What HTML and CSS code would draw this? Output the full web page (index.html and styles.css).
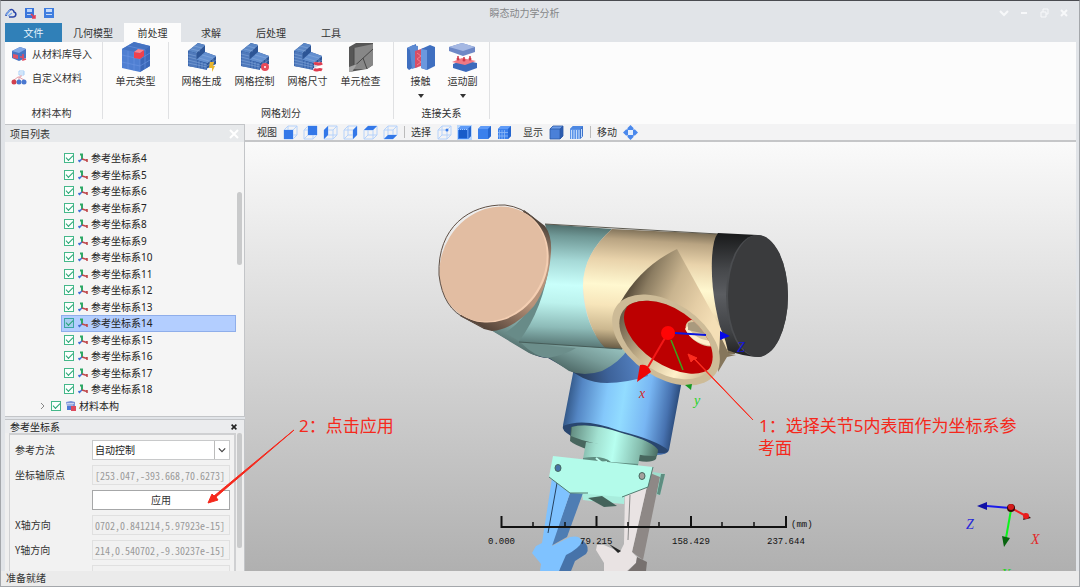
FILE: index.html
```html
<!DOCTYPE html>
<html lang="zh-CN">
<head>
<meta charset="utf-8">
<title>瞬态动力学分析</title>
<link rel="stylesheet" href="styles.css">
</head>
<body>
<svg class="defs" aria-hidden="true">
  <defs>
    <symbol id="i-csys" viewBox="0 0 10 10"><path d="M4 6V1M2 1.500H5" stroke="#2fa866" stroke-width="2" fill="none"/><path d="M4 6L1 8.500M.5 7l1.500 2" stroke="#3f6fd6" stroke-width="1.600" fill="none"/><path d="M4 6l5 1.500M9 6v3" stroke="#c0494c" stroke-width="1.600" fill="none"/></symbol>
    <symbol id="i-mat" viewBox="0 0 10 10"><path d="M0 1l5-1 4 1v4H1z" fill="#7b93d8"/><path d="M1 4h6M1 2.500h7" stroke="#e8eefc" stroke-width=".7"/><path d="M1 5h5v4H1z" fill="#4d79d6"/><path d="M5 5h5v5H5z" fill="#dc4a5e"/></symbol>
    <symbol id="i-mesh" viewBox="0 0 30 30">
      <path d="M1 9L11 1l7 2v7l11 4v8l-10 5L1 24z" fill="#2d5596"/>
      <path d="M1 9L11 1l7 2-9 8z" fill="#5b87c6"/><path d="M9 18l9-8 11 4-9 7z" fill="#6490d0"/>
      <path d="M1 9l8 2v7l11 3v7L1 24z" fill="#3b67ae"/>
      <path d="M1 12l8 2M1 15l8 2M1 18l8 2 11 3M1 21l19 4M3 9.500V24M5 10v15M7 10.500V25M9 11v15M12 19v7M15 20v7M18 21v6M4 7l9 2M7 4l8 2M9 11l9-8M20 21l9-7M20 24l9-6M23 19v7M26 17v7M12 16l10 3M15 13l11 3" stroke="#8fb0e0" stroke-width=".5" fill="none"/>
    </symbol>
    <symbol id="i-wire" viewBox="0 0 15 15"><path d="M1 5h9v9H1zM5 1h9v9H5zM1 5l4-4M10 5l4-4M10 14l4-4M1 14l4-4" fill="none" stroke="#b5d2fb" stroke-width="1"/></symbol>
    <symbol id="i-solid" viewBox="0 0 15 15"><path d="M1 4l3-3h10v10l-3 3H1z" fill="#3b80ec"/><path d="M1 4l3-3h10l-3 3z" fill="#5f9bf7"/><path d="M11 4l3-3v10l-3 3z" fill="#2566d0"/></symbol>
    <symbol id="i-shaded" viewBox="0 0 15 15"><path d="M1 4l3-3h10v10l-3 3H1z" fill="#4a80d8"/><path d="M1 4l3-3h10l-3 3z" fill="#6d9ce6"/><path d="M11 4l3-3v10l-3 3z" fill="#2c5cb0"/><path d="M1 4l3-3h10v10l-3 3H1zM1 4h10v10M11 4l3-3" stroke="#2c58a6" stroke-width=".8" fill="none"/></symbol>
    <symbol id="i-lined" viewBox="0 0 15 15"><path d="M1 4l3-3h10v10l-3 3H1z" fill="#5b93e8"/><path d="M1 4l3-3h10l-3 3z" fill="#4d88e2"/><path d="M11 4l3-3v10l-3 3z" fill="#3c73cc"/><path d="M2.500 5v9M5 5v9M7.500 5v9M10 5v9M12.500 4v8" stroke="#c5dcfb" stroke-width="1"/></symbol>
  </defs>
</svg>

<div class="app">
  <header class="titlebar">
    <div class="quick">
      <button aria-label="主页"><svg viewBox="0 0 12 12"><path d="M1 9c0-3 2-3 3-5 2-3 5-1 5 1 3 1 2 5-1 5H4" fill="none" stroke="#2b46a8" stroke-width="1.600"/><path d="M1 8l4-5M3 9l4-3" stroke="#79a9ee" stroke-width="1.300"/></svg></button>
      <button aria-label="另存为"><svg viewBox="0 0 12 12"><path d="M1 1h9v10H1z" fill="#3b76db"/><path d="M3 2h5v3H3zM3 7h5v1H3z" fill="#b9d4fb"/><path d="M7 7l4 4M11 8v3H8" stroke="#e23f55" stroke-width="1.500" fill="none"/></svg></button>
      <button aria-label="保存"><svg viewBox="0 0 12 12"><path d="M1 1h10v10H1z" fill="#3f7ddf"/><path d="M3 2h6v3H3zM3 7h6v1H3z" fill="#c5dbfb"/></svg></button>
    </div>
    <h1>瞬态动力学分析</h1>
    <div class="winctl">
      <button aria-label="展开"><svg viewBox="0 0 10 10"><path d="M1 3l4 4 4-4"/></svg></button>
      <button aria-label="最小化"><svg viewBox="0 0 10 10"><path d="M2 5h6"/></svg></button>
      <button aria-label="还原"><svg viewBox="0 0 10 10"><path d="M2 4h5v5H2zM4 4V1h5v5H7" stroke-width="1"/></svg></button>
      <button aria-label="关闭"><svg viewBox="0 0 10 10"><path d="M2 2l6 6M8 2L2 8"/></svg></button>
    </div>
  </header>

  <nav class="tabs">
    <button class="tab file">文件</button>
    <button class="tab">几何模型</button>
    <button class="tab active">前处理</button>
    <button class="tab">求解</button>
    <button class="tab">后处理</button>
    <button class="tab">工具</button>
  </nav>

  <section class="ribbon">
    <div class="group material">
      <div class="stack">
        <button class="line"><svg viewBox="0 0 16 16"><path d="M1 5l8-4 6 2v9l-7 3-7-3z" fill="#4575c4"/><path d="M1 5l8-4 6 2-7 4z" fill="#80a8e6"/><path d="M2 8l5 1v4l-5-1z" fill="#df5468"/><path d="M9 11h4M12 8v6l3-1" stroke="#e44b60" stroke-width="1.500" fill="none"/></svg>从材料库导入</button>
        <button class="line"><svg viewBox="0 0 16 16"><path d="M8 1h5v4H8zM9 3h4" fill="none" stroke="#a6cef7"/><path d="M3 10l4-3h3V5M8 7v3M8 7l5 3" stroke="#e7a4ad" fill="none"/><circle cx="3" cy="12" r="2.500" fill="#d2404e"/><circle cx="8" cy="12" r="2.500" fill="#4a78d0"/><circle cx="13" cy="12" r="2.500" fill="#4a78d0"/></svg>自定义材料</button>
      </div>
      <span class="caption">材料本构</span>
    </div>
    <div class="group single">
      <div class="tools"><button class="tool"><svg viewBox="0 0 30 30"><path d="M1 7L13 0l16 4v20l-10 6L1 26z" fill="#4f7fd2"/><path d="M1 7L13 0l16 4-10 7z" fill="#4573c2"/><path d="M19 11l10-7v20l-10 6z" fill="#3c68b8"/><path d="M1 13l18 4 10-6M1 20l18 4 10-6M7 9v18M13 10v19M7 4l17 4M19 11v19M24 8v19" stroke="#6c96e2" stroke-width=".6" fill="none"/><path d="M13 10l6 1 4-3v6l-4 3-6-1z" fill="#f0404c"/><path d="M13 10l4-3 6 1-4 3z" fill="#ff8088"/></svg>单元类型</button></div>
    </div>
    <div class="group mesh">
      <div class="tools">
        <button class="tool"><svg viewBox="0 0 30 30"><use href="#i-mesh"/><path d="M23 20h4l-1 4h2l-3 6v-4h-3z" fill="#e7b52e"/></svg>网格生成</button>
        <button class="tool"><svg viewBox="0 0 30 30"><use href="#i-mesh"/><circle cx="25" cy="25" r="2.500" fill="#fff" stroke="#e94b5a" stroke-width="3"/></svg>网格控制</button>
        <button class="tool"><svg viewBox="0 0 30 30"><use href="#i-mesh"/><path d="M21 20h8v10h-8z" fill="#fff" opacity=".7"/><path d="M21 22c3-2 4 2 8-1M21 27c3 3 4-1 8 1" stroke="#df3d50" stroke-width="3" fill="none"/></svg>网格尺寸</button>
        <button class="tool"><svg viewBox="0 0 30 30"><path d="M3 5l7-4 17 0v22l-6 4-18 3z" fill="#565656"/><path d="M8 6l19-4v21l-6 4-13 0z" fill="#878787"/><path d="M3 29L27 7M17 16l4 11M8 6v18" stroke="#484848" stroke-width="1" fill="none"/><path d="M3 25l8-3-5 8H3z" fill="#a4a4a4"/></svg>单元检查</button>
      </div>
      <span class="caption">网格划分</span>
    </div>
    <div class="group link">
      <div class="tools">
        <button class="tool"><svg viewBox="0 0 30 30"><path d="M1 6l9-4v22l-7 4-2-2z" fill="#3f6fc0"/><path d="M1 6l6-3 5 1v21l-6 2-2-19z" fill="#5d8ad2"/><path d="M9 9l9-3v17l-9 3z" fill="#d84e65"/><path d="M11 11l4 3-4 3 4 3-4 3" stroke="#f47f90" stroke-width="1" fill="none"/><path d="M15 7l9-4 5 2v19l-8 4-6-2z" fill="#3f6fc0"/><path d="M15 7l6 1v20l-6-2z" fill="#6b98de"/></svg>接触<i class="caret"></i></button>
        <button class="tool"><svg viewBox="0 0 30 30"><path d="M1 5l13-4 13 4v5l-12 4-14-5z" fill="#6d88c6"/><path d="M1 5l13-4 13 4-12 4z" fill="#a5b8e3"/><path d="M5 22l10-4 14 3v5l-11 4L5 26z" fill="#3c6abc"/><path d="M4 20l10-4 14 3-11 4z" fill="#f07984"/><path d="M10 18v-4M16 19v-4M22 18v-4" stroke="#cf3949" stroke-width="1.500" fill="none"/><circle cx="10" cy="17" r="1.500" fill="#cf3949"/><circle cx="16" cy="18" r="1.500" fill="#cf3949"/><circle cx="22" cy="17" r="1.500" fill="#cf3949"/></svg>运动副<i class="caret"></i></button>
      </div>
      <span class="caption">连接关系</span>
    </div>
  </section>

  <main class="work">
    <aside class="side">
      <section class="panel project">
        <header class="phead">项目列表<button aria-label="关闭项目列表"><svg viewBox="0 0 10 10"><path d="M1 1l8 8M9 1L1 9" stroke="#fff" stroke-width="2"/></svg></button></header>
        <div class="treewrap">
          <ul class="tree">
            <li><label><input type="checkbox" checked><svg><use href="#i-csys"/></svg>参考坐标系4</label></li>
            <li><label><input type="checkbox" checked><svg><use href="#i-csys"/></svg>参考坐标系5</label></li>
            <li><label><input type="checkbox" checked><svg><use href="#i-csys"/></svg>参考坐标系6</label></li>
            <li><label><input type="checkbox" checked><svg><use href="#i-csys"/></svg>参考坐标系7</label></li>
            <li><label><input type="checkbox" checked><svg><use href="#i-csys"/></svg>参考坐标系8</label></li>
            <li><label><input type="checkbox" checked><svg><use href="#i-csys"/></svg>参考坐标系9</label></li>
            <li><label><input type="checkbox" checked><svg><use href="#i-csys"/></svg>参考坐标系10</label></li>
            <li><label><input type="checkbox" checked><svg><use href="#i-csys"/></svg>参考坐标系11</label></li>
            <li><label><input type="checkbox" checked><svg><use href="#i-csys"/></svg>参考坐标系12</label></li>
            <li><label><input type="checkbox" checked><svg><use href="#i-csys"/></svg>参考坐标系13</label></li>
            <li class="selected"><label><input type="checkbox" checked><svg><use href="#i-csys"/></svg>参考坐标系14</label></li>
            <li><label><input type="checkbox" checked><svg><use href="#i-csys"/></svg>参考坐标系15</label></li>
            <li><label><input type="checkbox" checked><svg><use href="#i-csys"/></svg>参考坐标系16</label></li>
            <li><label><input type="checkbox" checked><svg><use href="#i-csys"/></svg>参考坐标系17</label></li>
            <li><label><input type="checkbox" checked><svg><use href="#i-csys"/></svg>参考坐标系18</label></li>
            <li class="parent"><svg class="chev" viewBox="0 0 6 8"><path d="M1 1l3 3-3 3" fill="none" stroke="#888"/></svg><label><input type="checkbox" checked><svg><use href="#i-mat"/></svg>材料本构</label></li>
          </ul>
          <div class="track"><span class="thumb upper"></span></div>
        </div>
      </section>

      <section class="panel props">
        <header class="phead plain">参考坐标系<button aria-label="关闭参考坐标系"><svg viewBox="0 0 10 10"><path d="M2 2l6 6M8 2L2 8" stroke="#222" stroke-width="2"/></svg></button></header>
        <div class="formwrap">
          <form class="form">
            <label for="method">参考方法</label>
            <div class="selectbox"><select id="method"><option>自动控制</option></select><svg viewBox="0 0 10 10"><path d="M1 3l4 4 4-4" fill="none" stroke="#444" stroke-width="1.500"/></svg></div>
            <label for="origin">坐标轴原点</label>
            <input id="origin" class="num" value="[253.047,-393.668,70.6273]" readonly>
            <button type="button" class="apply">应用</button>
            <label for="xdir">X轴方向</label>
            <input id="xdir" class="num" value="0702,0.841214,5.97923e-15]" readonly>
            <label for="ydir">Y轴方向</label>
            <input id="ydir" class="num" value="214,0.540702,-9.30237e-15]" readonly>
            <input class="num last" aria-label="Z轴方向" readonly>
          </form>
          <div class="track"><span class="thumb lower"></span></div>
        </div>
      </section>
    </aside>

    <section class="stage">
      <div class="viewbar">
        <span>视图</span>
        <div class="icons">
          <button aria-label="前视图"><svg><use href="#i-wire"/><path d="M1 5h9v9H1z" fill="#3478e8"/></svg></button>
          <button aria-label="后视图"><svg><use href="#i-wire"/><path d="M5 1h9v9H5z" fill="#3478e8"/></svg></button>
          <button aria-label="左视图"><svg><use href="#i-wire"/><path d="M1 5l4-4v9l-4 4z" fill="#3478e8"/></svg></button>
          <button aria-label="右视图"><svg><use href="#i-wire"/><path d="M10 5l4-4v9l-4 4z" fill="#3478e8"/></svg></button>
          <button aria-label="俯视图"><svg><use href="#i-wire"/><path d="M1 5l4-4h9l-4 4z" fill="#3478e8"/></svg></button>
          <button aria-label="仰视图"><svg><use href="#i-wire"/><path d="M1 14l4-4h9l-4 4z" fill="#3478e8"/></svg></button>
        </div>
        <i class="sep"></i>
        <span>选择</span>
        <div class="icons">
          <button aria-label="选择点"><svg><use href="#i-wire"/><circle cx="10" cy="5" r="1.500" fill="#3478e8"/></svg></button>
          <button aria-label="选择面" class="on"><svg><use href="#i-solid"/><path d="M1 4.500h10V14" fill="none" stroke="#a6cafd" stroke-dasharray="1 1"/><path d="M2 5h8v8H2z" fill="#195cc9"/></svg></button>
          <button aria-label="选择体"><svg><use href="#i-solid"/></svg></button>
          <button aria-label="选择网格"><svg><use href="#i-solid"/><path d="M2.500 5v9M5 5v9M7.500 5v9M1 7.500h10M1 11h10" stroke="#8db8f6" stroke-width=".8"/></svg></button>
        </div>
        <span class="show">显示</span>
        <div class="icons">
          <button aria-label="显示实体"><svg><use href="#i-shaded"/></svg></button>
          <button aria-label="显示网格"><svg><use href="#i-lined"/></svg></button>
        </div>
        <i class="sep"></i>
        <span>移动</span>
        <div class="icons"><button aria-label="移动"><svg viewBox="0 0 15 15"><path d="M7.500 0l3 3v2h-6V3zM7.500 15l3-3v-2h-6v2zM0 7.500l3-3h2v6H3zM15 7.500l-3-3h-2v6h2z" fill="#4a88ec"/><path d="M5 5h5v5H5z" fill="#e4eefc"/></svg></button></div>
      </div>
      <svg class="scene" viewBox="245 142 831 429" preserveAspectRatio="xMidYMid slice" role="img" aria-label="机械臂模型">
        <defs>
          <linearGradient id="teal" gradientUnits="userSpaceOnUse" x1="570" y1="224" x2="564" y2="346"><stop offset="0" stop-color="#4c6866"/><stop offset=".1" stop-color="#6f9896"/><stop offset=".3" stop-color="#a6d9d7"/><stop offset=".5" stop-color="#c9fffb"/><stop offset=".65" stop-color="#bcf2ed"/><stop offset=".85" stop-color="#8dbbb8"/><stop offset="1" stop-color="#587775"/></linearGradient>
          <linearGradient id="cream" gradientUnits="userSpaceOnUse" x1="650" y1="229" x2="642" y2="350"><stop offset="0" stop-color="#766952"/><stop offset=".1" stop-color="#b9a482"/><stop offset=".27" stop-color="#e9d3ab"/><stop offset=".48" stop-color="#fff8d0"/><stop offset=".65" stop-color="#f7e5ba"/><stop offset=".85" stop-color="#cbb78f"/><stop offset="1" stop-color="#695c45"/></linearGradient>
          <linearGradient id="elbow" gradientUnits="userSpaceOnUse" x1="580" y1="325" x2="560" y2="376"><stop offset="0" stop-color="#a0cdca"/><stop offset=".5" stop-color="#789c99"/><stop offset="1" stop-color="#3f5755"/></linearGradient>
          <linearGradient id="tube" gradientUnits="userSpaceOnUse" x1="566" y1="400" x2="678" y2="418"><stop offset="0" stop-color="#315584"/><stop offset=".12" stop-color="#5486c4"/><stop offset=".35" stop-color="#84c8fb"/><stop offset=".5" stop-color="#92dcff"/><stop offset=".72" stop-color="#78b6f3"/><stop offset=".9" stop-color="#4772b0"/><stop offset="1" stop-color="#25436f"/></linearGradient>
          <linearGradient id="joint" gradientUnits="userSpaceOnUse" x1="580" y1="380" x2="650" y2="365"><stop offset="0" stop-color="#283c5a"/><stop offset=".4" stop-color="#3d6299"/><stop offset="1" stop-color="#5b8bce"/></linearGradient>
          <linearGradient id="dark" gradientUnits="userSpaceOnUse" x1="735" y1="233" x2="735" y2="356"><stop offset="0" stop-color="#18191a"/><stop offset=".3" stop-color="#46484b"/><stop offset=".5" stop-color="#5b5d61"/><stop offset=".8" stop-color="#404245"/><stop offset="1" stop-color="#222"/></linearGradient>
          <linearGradient id="cone" gradientUnits="userSpaceOnUse" x1="632" y1="285" x2="713" y2="322"><stop offset="0" stop-color="#5c503d"/><stop offset=".15" stop-color="#8b7c61"/><stop offset=".45" stop-color="#c9b48f"/><stop offset=".75" stop-color="#e5cea6"/><stop offset="1" stop-color="#f4dfb6"/></linearGradient>
          <linearGradient id="capSide" gradientUnits="userSpaceOnUse" x1="545" y1="225" x2="480" y2="332"><stop offset="0" stop-color="#4e4239"/><stop offset=".25" stop-color="#b5947d"/><stop offset=".6" stop-color="#b8937a"/><stop offset="1" stop-color="#493a31"/></linearGradient>
          <linearGradient id="mint" gradientUnits="userSpaceOnUse" x1="570" y1="440" x2="658" y2="455"><stop offset="0" stop-color="#648e82"/><stop offset=".3" stop-color="#a3e2d2"/><stop offset=".5" stop-color="#b7fff0"/><stop offset=".8" stop-color="#83b9aa"/><stop offset="1" stop-color="#48695f"/></linearGradient>
          <linearGradient id="bore" gradientUnits="userSpaceOnUse" x1="620" y1="320" x2="710" y2="380"><stop offset="0" stop-color="#6d604b"/><stop offset=".35" stop-color="#c9b58f"/><stop offset=".7" stop-color="#fff0c9"/><stop offset="1" stop-color="#c5b08a"/></linearGradient>
          <clipPath id="inner"><ellipse cx="666" cy="340" rx="52" ry="32" transform="rotate(34 666 340)"/></clipPath>
        </defs>
        <!-- wrist tube -->
        <path d="M574 368L563 425Q562 430 572 436L650 455Q668 456 669 450L682 380L640 350Z" fill="url(#tube)"/>
        <path d="M563 426Q584 417 620 431Q656 440 668 450Q668 454 657 453Q630 434 590 426Q572 424 571 436Q561 430 563 426Z" fill="#29466f"/>
        <path d="M571 427Q590 422 625 434Q650 441 658 450L656 459Q650 465 626 458Q580 450 570 441Z" fill="#48665e"/>
        <path d="M572 427Q590 422 625 434Q652 441 658 450L657 456Q638 457 612 447Q582 441 571 436Z" fill="url(#mint)"/>
        <path d="M586 442Q612 444 640 454L638 466L583 459Z" fill="url(#mint)"/>
        <path d="M583 458Q603 455 611 462L638 464V470L583 464Z" fill="#5f8d81"/><path d="M596 458l6 5 5-1" stroke="#c3fff1" stroke-width="2" fill="none"/>
        <!-- gripper -->
        <path d="M653 472L665 474L660 495L650 493Z" fill="#9edfce"/><path d="M665 474L660 495L657 494L661 474Z" fill="#5e8d80"/>
        <path d="M582 494L625 492L624 504L600 502L583 500Z" fill="#a9eddd"/><path d="M588 498L602 496L617 506L604 507Z" fill="#44635b"/>
        <path d="M582 540Q591 547 586 554L575 561L571 571H559L562 558Z" fill="#4773a9"/>
        <path d="M570 493L583 493L567 537L551 546Z" fill="#4f7db3"/>
        <path d="M552 478L570 493L552 546L570 537Q580 535 582 541Q580 548 566 555L559 571H540L541 564L532 553L536 546L542 543Z" fill="#7fc2ff"/>
        <path d="M557 483L548 533" stroke="#26415f" stroke-width="1"/>
        <path d="M650 473L660 477L643 560L632 552Z" fill="#8e8886"/>
        <path d="M625 492L648 482L632 552L637 557L636 563L627 571H604V563L596 550L597 545L604 545L620 552L624 544Z" fill="#e9e3e3"/>
        <path d="M637 557L647 562L646 571H628L636 563Z" fill="#77716f"/><path d="M609 544L621 551L618 553Z" fill="#252525"/>
        <path d="M630 495L628 540" stroke="#888" stroke-width="1"/>
        <path d="M553 456L653 467L648 487L622 497L588 494L570 493L549 477Z" fill="#b3fbea"/>
        <path d="M653 467l-5 20-26 10M549 477l21 16h18" stroke="#527b70" fill="none"/>
        <ellipse cx="558" cy="468" rx="3" ry="3.500" fill="#4673a8" stroke="#47675f"/><ellipse cx="642" cy="476" rx="3" ry="3.500" fill="#a5a19e" stroke="#47675f"/>
        <!-- elbow and joint -->
        <path d="M485 326L530 353Q540 358 548 358L583 378Q594 383 607 383Q626 383 648 376L640 340L520 330Z" fill="url(#joint)"/>
        <path d="M549 255L525 341L628 349Q620 362 602 371Q584 377 569 371L548 357Q537 357 529 353L484 326Z" fill="url(#elbow)"/>
        <path d="M520 342Q545 346 576 348Q565 355 548 358Q535 357 520 342Z" fill="#6c8e8b"/>
        <!-- main tube -->
        <path d="M545 224L612 229Q582 255 583 290Q585 325 605 348L519 342Q544 305 551 250Z" fill="url(#teal)"/>
        <path d="M550 260Q543 310 519 341L505 333Q536 313 550 260Z" fill="#688b88"/>
        <path d="M612 229L718 234L735 354L700 353L605 348Q586 328 583 288Q582 255 612 229Z" fill="url(#cream)"/>
        <path d="M519 342L622 349" stroke="#465c58"/><path d="M545 224L718 234" stroke="#5d5a50"/>
        <!-- end cap, right -->
        <path d="M718 233L758 235L760 357Q744 357 727 350Q710 300 712 258Q713 239 718 233Z" fill="url(#dark)"/>
        <ellipse cx="757" cy="296" rx="31" ry="61" fill="#4b4d50"/><ellipse cx="758" cy="296" rx="30" ry="61" fill="#3a3b3d"/>
        <!-- end cap, left -->
        <path d="M524 210L545 226Q552 236 551 252Q549 285 534 306Q514 329 492 331L484 329L460 316Z" fill="url(#capSide)"/>
        <ellipse cx="495" cy="265" rx="51" ry="60" transform="rotate(32 495 265)" fill="#f4ceb2"/>
        <ellipse cx="493" cy="264" rx="51" ry="60" transform="rotate(32 493 264)" fill="#e2bda2"/>
        <path d="M439 275C437 227 470 204 505 205Q522 207 535 219M439 275Q443 309 467 319L484 328" stroke="#5f5046" fill="none"/>
        <!-- branch with open bore -->
        <path d="M677 249Q640 267 620 303L616 325L680 375L719 369L728 354Q727 342 720 327Z" fill="url(#cone)"/>
        <path d="M720 335L729 354L736 355L727 357L718 372Z" fill="#85765c"/>
        <ellipse cx="666" cy="340" rx="60" ry="37" transform="rotate(34 666 340)" fill="#cdbb97"/>
        <g clip-path="url(#inner)">
          <path d="M600 280H740V400H600Z" fill="url(#bore)"/>
          <ellipse cx="670" cy="336" rx="52" ry="29" transform="rotate(34 670 336)" fill="#bc0001"/>
          <ellipse cx="703" cy="333" rx="19" ry="11" transform="rotate(30 703 333)" fill="#d9c7a0"/>
          <path d="M687 326Q698 344 719 340L717 346Q694 346 685 329Z" fill="#fff0cc"/><path d="M688 323Q700 319 715 333L712 335Q700 333 688 330Z" fill="#a99a7e"/>
        </g>
        <!-- local axes -->
        <path d="M675 333L706 335" stroke="#0b16e0" stroke-width="2"/><path d="M720 331L730 336L720 340Z" fill="#0508e8"/>
        <path d="M671 340L683 370" stroke="#3aa51c" stroke-width="1.500"/><path d="M685 385L692 384L691 390Z" fill="#159a20"/>
        <path d="M665 338L648 367" stroke="#f31818" stroke-width="2"/><path d="M640 365Q648 363 651 372L637 382Z" fill="#ee0606"/>
        <circle cx="668" cy="333" r="7" fill="#ff0505"/>
        <g class="axis"><text x="737" y="352" fill="#1515d5">Z</text><text x="639" y="398" fill="#d22a2a">x</text><text x="694" y="405" fill="#27d327">y</text></g>
        <!-- scale -->
        <path d="M501.500 516V527H786V516M596.500 516v11M691 516v11" stroke="#111" stroke-width="2" fill="none"/>
        <path d="M533 522v5M565 522v5M628 522v5M659 522v5M722 522v5M754 522v5" stroke="#111" stroke-width="1.500"/>
        <g class="scale"><text x="488" y="544">0.000</text><text x="580" y="544">79.215</text><text x="672" y="544">158.429</text><text x="767" y="544">237.644</text><text x="791" y="527">(mm)</text></g>
        <!-- orientation triad -->
        <path d="M1010 508L987 506" stroke="#1b1bea" stroke-width="2"/><path d="M977 506L987 502V510Z" fill="#1010a5"/>
        <path d="M1011 510L1006 538" stroke="#0bf51b" stroke-width="2"/><path d="M1002 536L1010 538L1004 547Z" fill="#08640f"/>
        <path d="M1013 509L1026 516" stroke="#f12020" stroke-width="2"/><path d="M1025 513L1031 518L1023 520Z" fill="#391111"/><circle cx="1026" cy="516" r="3" fill="#e91d1d"/>
        <circle cx="1011" cy="508" r="4" fill="#3a0909"/><circle cx="1011" cy="507" r="3" fill="#d51c1c"/>
        <g class="axis"><text x="966" y="529" fill="#2929d8">Z</text><text x="1031" y="544" fill="#e32626">X</text><text x="1002" y="579" fill="#1ed61e">Y</text></g>
      </svg>
    </section>
  </main>

  <footer class="status">准备就绪</footer>

  <svg class="notes" viewBox="0 0 1080 587">
    <path d="M294 430L216 497L218 500L208 503L212 494L214 496Z" fill="#f5281c" stroke="#f5281c" stroke-width="1"/>
    <path d="M753 420L694 359L691 362L688 354L697 358L695 359Z" fill="#fb2d20" stroke="#fb2d20" stroke-width="1"/>
    <text x="299" y="432">2：点击应用</text>
    <text x="759" y="432">1：选择关节5内表面作为坐标系参</text>
    <text x="758" y="454">考面</text>
  </svg>
</div>
</body>
</html>
```
FILE: styles.css
```css
* { box-sizing: border-box; }
html, body { height: 100%; margin: 0; }
body {
  font: 10px/14px "Noto Sans CJK SC", sans-serif;
  color: #333;
  background: #e1e4e8;
}
button, input, select { font: inherit; color: inherit; margin: 0; padding: 0; }
button { background: none; border: 0; }
.defs { position: absolute; width: 0; height: 0; }

.app {
  position: relative;
  display: flex;
  flex-direction: column;
  height: 100%;
  border: 1px solid #a4a7ab;
  border-top-color: #4a4b50;
  padding: 0 3px 0 4px;
  overflow: hidden;
}

.titlebar {
  display: grid;
  grid-template-columns: 1fr auto 1fr;
  align-items: center;
  height: 22px;
  flex: none;
  padding-top: 2px;
  padding-right: 32px;
}
.titlebar h1 { margin: 0; font-size: 10px; font-weight: 400; color: #858789; }
.quick { display: flex; gap: 7px; }
.quick svg { display: block; width: 12px; height: 12px; }
.winctl { display: flex; gap: 10px; justify-content: flex-end; margin-right: -25px; }
.winctl svg { display: block; width: 10px; height: 10px; fill: none; stroke: #f7f8fa; stroke-width: 2; }

.tabs {
  display: grid;
  grid-template-columns: 57px 62px 57px 60px 60px 60px;
  height: 19px;
  flex: none;
}
.tab.file { background: #3080b8; color: #e6f3fc; }
.tab.active { background: #fcfcfc; }

.ribbon { display: flex; height: 82px; flex: none; background: #fcfcfc; }
.group {
  display: flex;
  flex-direction: column;
  justify-content: space-between;
  border-right: 1px solid #e0e1e3;
  height: 77px;
  align-items: center;
}
.material { width: 98px; align-items: stretch; }
.single { width: 66px; }
.mesh { width: 225px; }
.link { width: 96px; }
.caption { text-align: center; line-height: 12px; }
.material .caption { padding-right: 4px; }
.stack { display: flex; flex-direction: column; gap: 8px; padding: 4px 0 0 6px; }
.line { display: flex; align-items: center; gap: 5px; height: 16px; white-space: nowrap; }
.line svg { width: 16px; height: 16px; }
.tools { display: flex; }
.tool { display: flex; flex-direction: column; align-items: center; width: 53px; gap: 2px; white-space: nowrap; }
.tool svg { width: 30px; height: 30px; }
.link .tool { width: 42px; }
.caret { border: 3px solid transparent; border-top: 4px solid #333; border-bottom: 0; margin-top: 4px; }

.work { display: flex; flex: 1; min-height: 0; }
.side { display: flex; flex-direction: column; gap: 2px; width: 240px; flex: none; }
.panel { display: flex; flex-direction: column; border: 1px solid #c3c5c8; border-left-width: 0; background: #f5f5f5; }
.project { flex: 293 1 0; min-height: 0; }
.props { flex: 152 1 0; min-height: 0; border-bottom: 0; background: #efefef; overflow: hidden; }
.phead {
  display: flex;
  justify-content: space-between;
  align-items: center;
  height: 17px;
  flex: none;
  padding: 0 5px;
  background: #e7e9eb;
}
.phead.plain { height: 13px; background: #ebecee; color: #222; }
.phead svg { display: block; width: 10px; height: 10px; }
.plain svg { width: 8px; height: 8px; margin-right: 1px; }
.treewrap { display: flex; flex: 1; min-height: 0; padding: 8px 0 2px; }
.tree {
  flex: 1;
  display: grid;
  grid-auto-rows: 1fr;
  list-style: none;
  margin: 0;
  padding: 0 0 0 56px;
  color: #222;
  font-family: "Noto Sans", "Noto Sans CJK SC", sans-serif;
}
.tree li { display: flex; align-items: center; padding-left: 2px; border: 1px solid transparent; min-height: 0; }
.tree li.selected { background: #b3ceff; border-color: #8faeea; }
.tree li.parent { margin-left: -22px; padding-left: 0; gap: 5px; }
.tree label { display: flex; align-items: center; }
.tree label svg { width: 10px; height: 10px; margin: 0 3px 0 4px; }
.tree .parent label svg { margin-left: 5px; }
.tree .chev { width: 6px; height: 8px; }
.tree input {
  appearance: none;
  display: grid;
  place-items: center;
  width: 10px;
  height: 10px;
  border: 1px solid #45b88a;
  background: #fbfffd;
}
.tree .selected input { background: #a6cdf0; border-color: #3ba6a3; }
.tree input:checked::after {
  content: "";
  width: 6px;
  height: 3px;
  border: solid #25a472;
  border-width: 0 0 1px 1px;
  transform: rotate(-45deg);
  margin-bottom: 2px;
}
.track { width: 8px; flex: none; padding-left: 1px; }
.thumb { display: block; width: 5px; border-radius: 3px; background: #c9cacb; }
.thumb.upper { height: 73px; margin-top: 42px; }
.thumb.lower { height: 115px; border-radius: 2px; }

.formwrap { display: flex; flex: 1; min-height: 0; padding-left: 4px; }
.form {
  flex: 1;
  display: grid;
  grid-template-columns: 77px 1fr;
  grid-auto-rows: 20px;
  row-gap: 5px;
  align-content: start;
  align-items: center;
  padding: 5px 4px 0 5px;
  border: 2px solid #cfd0d2;
  border-width: 2px 2px 0 1px;
  background: #f2f2f2;
  overflow: hidden;
}
.selectbox { position: relative; height: 20px; }
.selectbox select {
  appearance: none;
  width: 100%;
  height: 20px;
  padding: 0 16px 0 2px;
  border: 1px solid #c8c9ca;
  border-radius: 0;
  background: #fff;
  color: #222;
}
.selectbox svg {
  position: absolute;
  top: 1px;
  right: 1px;
  width: 15px;
  height: 18px;
  padding: 0 3px;
  border-left: 1px solid #bbb;
  pointer-events: none;
}
.num {
  width: 100%;
  min-width: 0;
  height: 20px;
  padding: 0 2px;
  border: 1px solid #e0e0e0;
  background: #f1f1f1;
  color: #999;
  font-feature-settings: "hwid";
}
.apply { grid-column: 2; height: 20px; border: 1px solid #a6a7a8; background: #fff; }
.last { grid-column: 2; }

.stage { flex: 1; min-width: 0; display: flex; flex-direction: column; }
.viewbar {
  display: flex;
  align-items: center;
  height: 18px;
  flex: none;
  gap: 6px;
  padding-left: 12px;
  background: #f3f3f4;
  border-bottom: 2px solid #c5c6c8;
  white-space: nowrap;
}
.icons { display: flex; gap: 5px; }
.icons svg { display: block; width: 15px; height: 15px; }
.icons .on { background: #bad7fb; }
.show { margin-left: 5px; }
.sep { width: 1px; height: 12px; background: #bbb; }
.scene {
  display: block;
  flex: 1;
  width: 100%;
  min-height: 0;
  background: linear-gradient(#fafafa, #b0b0b0);
}
.axis { font: italic 14px "Liberation Serif", serif; }
.scale { font: 9px "Liberation Mono", monospace; fill: #111; }

.status {
  height: 15px;
  flex: none;
  margin: 0 -3px 0 -4px;
  padding-left: 5px;
  background: #ebebeb;
}
.notes { position: absolute; inset: -1px; width: calc(100% + 2px); height: calc(100% + 2px); pointer-events: none; }
.notes text { font: 17px "Noto Sans", "Noto Sans CJK SC", sans-serif; fill: #f5281c; }
```
